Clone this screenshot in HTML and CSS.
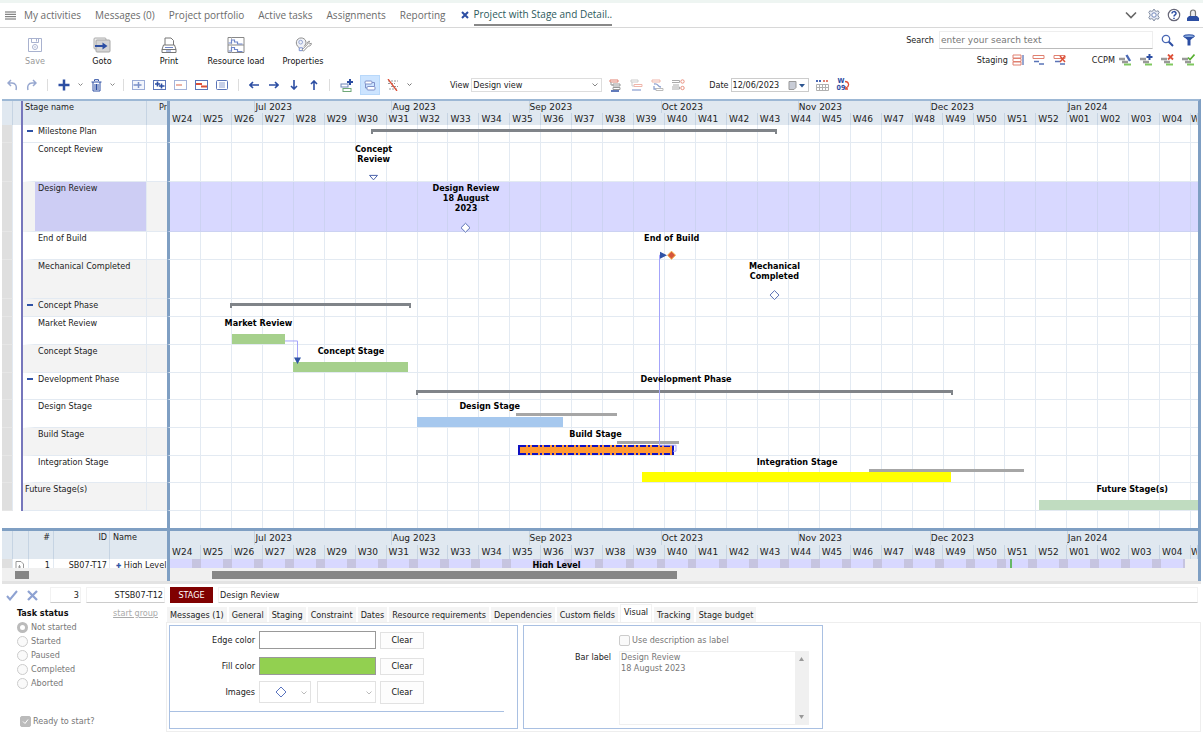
FILE: index.html
```html
<!DOCTYPE html>
<html lang="en">
<head>
<meta charset="utf-8">
<title>Project with Stage and Detail</title>
<link rel="stylesheet" href="styles.css">
</head>
<body>
<header class="topbar">
  <button class="icon-btn" aria-label="Menu"><svg width="11" height="9" viewBox="0 0 11 9"><path d="M0 1h11M0 3.300h11M0 5.700h11M0 8h11" stroke="#666"/></svg></button>
  <nav class="topnav">
    <a href="#">My activities</a><a href="#">Messages (0)</a><a href="#">Project portfolio</a><a href="#">Active tasks</a><a href="#">Assignments</a><a href="#">Reporting</a>
  </nav>
  <button class="icon-btn close" aria-label="Close tab"><svg width="8" height="8" viewBox="0 0 8 8"><path d="M1 1l6 6M7 1L1 7" stroke="#2c4ea3" stroke-width="2"/></svg></button>
  <a href="#" class="current">Project with Stage and Detail..</a>
  <div class="top-actions">
    <button class="icon-btn" aria-label="More"><svg width="12" height="12" viewBox="0 0 12 12"><path d="M1 3.500l5 5 5-5" fill="none" stroke="#666" stroke-width="1.600"/></svg></button>
    <button class="icon-btn" aria-label="Settings"><svg width="14" height="14" viewBox="0 0 14 14"><path d="M7 1l1 1.800 1.300.5L11.200 2.800l1 1.800-1.200 1.500v1.800l1.200 1.500-1 1.800-1.900-.5-1.300.5-1 1.800-1-1.800-1.300-.5-1.900.5-1-1.800L3 7.900V6.100L1.800 4.600l1-1.800 1.900.5L6 2.800z" fill="#e8ecf4" stroke="#8590a5"/><circle cx="7" cy="7" r="2.200" fill="#fff" stroke="#7086bb"/></svg></button>
    <button class="icon-btn" aria-label="Help"><svg width="14" height="14" viewBox="0 0 14 14"><circle cx="7" cy="7" r="5.700" fill="#fff" stroke="#667" stroke-width="1.200"/><path d="M5 5.600c0-2.600 4-2.600 4-.2C9 7 7 6.800 7 8.600M7 9.700v1.400" fill="none" stroke="#2c4ea3" stroke-width="1.500"/></svg></button>
    <button class="icon-btn" aria-label="Account"><svg width="12" height="14" viewBox="0 0 12 14"><path d="M3.500 8V4.500a2.500 2.500 0 015 0V8" fill="#eee" stroke="#777" stroke-width="1.200"/><path d="M0 13V10l2-2h8l2 2v3z" fill="#2c4ea3"/></svg></button>
  </div>
</header>

<section class="commands">
  <div class="main-tools">
    <button class="tool" disabled><svg width="16" height="16" viewBox="0 0 16 16"><path d="M1.500 1.500h13v13h-13zM4.500 1.500v4h7v-4" fill="none" stroke="#a9b2cf"/><circle cx="8" cy="10" r="2.500" fill="none" stroke="#a9b2cf"/><circle cx="8" cy="10" r=".8" fill="#a9b2cf"/><path d="M9.500 2v2.500" stroke="#a9b2cf"/></svg>Save</button>
    <button class="tool"><svg width="20" height="16" viewBox="0 0 20 16"><rect x="2" y="1" width="12" height="11" rx="1" fill="#eee" stroke="#aaa"/><rect x="4" y="3" width="14" height="12" rx="1" fill="#d4d4d4" stroke="#a8a8a8"/><path d="M3 9h9" stroke="#2c4ea3" stroke-width="2"/><path d="M10.500 5.500L15.500 9l-5 3.500z" fill="#2c4ea3"/></svg>Goto</button>
    <button class="tool"><svg width="18" height="16" viewBox="0 0 18 16"><path d="M5 8V1h6l2.500 2.500V8" fill="#fff" stroke="#777"/><path d="M2 12.500L3.500 8h11l1.500 4.500v3H2zM2 12.500h14" fill="#fff" stroke="#777"/><path d="M5 10.500h8M6 14h5" stroke="#6f86c9"/></svg>Print</button>
    <button class="tool"><svg width="18" height="16" viewBox="0 0 18 16"><path d="M1 .5h16v15H1zM1 8h16" fill="#fff" stroke="#888"/><path d="M4.500 .5v15" stroke="#bbb"/><path d="M1.500 6h3V3h3v2h3v2h5M1.500 14h3v-3.500h3v2h3v2h5" fill="none" stroke="#6f86c9" stroke-width="1.200"/></svg>Resource load</button>
    <button class="tool"><svg width="18" height="16" viewBox="0 0 18 17"><path d="M5 11.500C-.5 7.500 2 1 7 1s7 5.500 3 9" fill="#f0f2f7" stroke="#888"/><path d="M5 11.500v3h3.500v-3z" fill="#fff" stroke="#6f86c9"/><circle cx="6.500" cy="5.500" r="2" fill="none" stroke="#8fa0cf"/><path d="M8 13.500l5.500-5.500c-.5-2 .5-3.500 2.500-3.500l-1 2 .8 1 2-.8c.2 2-1.300 3.200-3 2.800L9.500 15z" fill="#fff" stroke="#888"/></svg>Properties</button>
  </div>
  <div class="side-tools">
    <div class="search">
      <label for="q">Search</label><input id="q" type="text" placeholder="enter your search text">
      <button class="icon-btn" aria-label="Find"><svg width="13" height="13" viewBox="0 0 13 13"><circle cx="5" cy="5" r="3.700" fill="#fff" stroke="#4a68b5" stroke-width="1.300"/><path d="M7.800 7.800L12 12" stroke="#2c4ea3" stroke-width="2"/></svg></button>
      <button class="icon-btn" aria-label="Filter"><svg width="12" height="12" viewBox="0 0 12 12"><path d="M.5 2.500L4.500 6v5.500h3V6l4-3.500z" fill="#2c4ea3"/><ellipse cx="6" cy="2.200" rx="5.500" ry="1.400" fill="#8fb0e0" stroke="#2c4ea3"/></svg></button>
    </div>
    <div class="modes">
      <span>Staging</span>
      <button class="icon-btn" aria-label="Stage rows"><svg width="12" height="12" viewBox="0 0 12 12"><path d="M1 1h8v3H1zM1 4.500h8v3H1zM1 8h8v3H1z" fill="#fff" stroke="#e08070"/><path d="M11 1v10" stroke="#2c4ea3"/></svg></button>
      <button class="icon-btn" aria-label="Stage link"><svg width="13" height="12" viewBox="0 0 13 12"><path d="M1 1.500h11v3H1z" fill="#fff" stroke="#e08070"/><path d="M2 7.500h5M7 10h5" stroke="#5a74b8" stroke-width="1.600"/></svg></button>
      <button class="icon-btn" aria-label="Remove stage"><svg width="13" height="12" viewBox="0 0 13 12"><path d="M1 1.500h11v3H1z" fill="#fff" stroke="#e08070"/><path d="M2 7.500h5M7 10h5" stroke="#5a74b8" stroke-width="1.600"/><path d="M7 2l5 6M12 2L7 8" stroke="#dd5038" stroke-width="1.500"/></svg></button>
      <span class="ccpm">CCPM</span>
      <button class="icon-btn" aria-label="Edit chain"><svg width="13" height="12" viewBox="0 0 13 12"><path d="M0 5h6M3 8h6" stroke="#999" stroke-width="2.500"/><path d="M5 10.500h7" stroke="#80c860" stroke-width="2"/><path d="M7.500 1L11 7" stroke="#4a68b5" stroke-width="2.400"/></svg></button>
      <button class="icon-btn" aria-label="Add chain"><svg width="13" height="12" viewBox="0 0 13 12"><path d="M0 5h6M3 8h6" stroke="#999" stroke-width="2.500"/><path d="M5 10.500h7" stroke="#80c860" stroke-width="2"/><path d="M9.500 0v6M6.500 3h6" stroke="#2c4ea3" stroke-width="2"/></svg></button>
      <button class="icon-btn" aria-label="Delete chain"><svg width="13" height="12" viewBox="0 0 13 12"><path d="M0 5h6M3 8h6" stroke="#999" stroke-width="2.500"/><path d="M5 10.500h7" stroke="#80c860" stroke-width="2"/><path d="M7 .5l5 5M12 .5l-5 5" stroke="#dd5038" stroke-width="1.800"/></svg></button>
      <button class="icon-btn" aria-label="Accept chain"><svg width="13" height="12" viewBox="0 0 13 12"><path d="M0 5h6M3 8h6" stroke="#999" stroke-width="2.500"/><path d="M5 10.500h7" stroke="#80c860" stroke-width="2"/><path d="M6 3.500l2 2L12.500 .5" fill="none" stroke="#58b030" stroke-width="1.600"/></svg></button>
    </div>
  </div>
</section>

<section class="editbar">
  <div class="tools">
    <button class="icon-btn" aria-label="Undo"><svg width="11" height="12" viewBox="0 0 11 12"><path d="M4 1L1 4l3 3M1.500 4H5c3.500 0 5 3 4 7" fill="none" stroke="#98a8d0" stroke-width="1.500"/></svg></button>
    <button class="icon-btn" aria-label="Redo"><svg width="11" height="12" viewBox="0 0 11 12"><path d="M7 1l3 3-3 3M9.500 4H6C2.500 4 1 7 2 11" fill="none" stroke="#98a8d0" stroke-width="1.500"/></svg></button>
    <i class="sep"></i>
    <button class="icon-btn" aria-label="Add"><svg width="12" height="12" viewBox="0 0 12 12"><path d="M6 .5v11M.5 6h11" stroke="#2c4ea3" stroke-width="2.500"/></svg></button>
    <button class="icon-btn" aria-label="Add options"><svg width="5" height="4" viewBox="0 0 5 4"><path d="M.5 .5l2 2 2-2" fill="none" stroke="#888"/></svg></button>
    <button class="icon-btn" aria-label="Delete"><svg width="11" height="13" viewBox="0 0 11 13"><path d="M3.500 2V.7h4V2M.5 3h10M2 3v9h7V3M4 5v6M5.500 5v6M7 5v6" fill="none" stroke="#2c4ea3"/></svg></button>
    <button class="icon-btn" aria-label="Delete options"><svg width="5" height="4" viewBox="0 0 5 4"><path d="M.5 .5l2 2 2-2" fill="none" stroke="#888"/></svg></button>
    <i class="sep wide"></i>
    <button class="icon-btn" aria-label="Expand"><svg width="13" height="10" viewBox="0 0 13 10"><rect x=".5" y=".5" width="12" height="9" fill="#f2f5fc" stroke="#9aabd6"/><path d="M6.500 2v6M3.500 5h6M3.500 5h-2" stroke="#7a90c8" stroke-width="1.500"/></svg></button>
    <button class="icon-btn" aria-label="Expand all"><svg width="13" height="10" viewBox="0 0 13 10"><rect x=".5" y=".5" width="12" height="9" fill="#fff" stroke="#5a74b8"/><path d="M4.500 1.500v5M2 4h5M8.500 3.500v5M6 6h5.500" stroke="#2c4ea3" stroke-width="1.600"/></svg></button>
    <button class="icon-btn" aria-label="Collapse"><svg width="13" height="10" viewBox="0 0 13 10"><rect x=".5" y=".5" width="12" height="9" fill="#fff" stroke="#a5b4da"/><path d="M2 5h6" stroke="#e8a090" stroke-width="1.600"/></svg></button>
    <button class="icon-btn" aria-label="Collapse all"><svg width="13" height="10" viewBox="0 0 13 10"><rect x=".5" y=".5" width="12" height="9" fill="#fff" stroke="#5a74b8"/><path d="M1 4h6M6 6.500h6" stroke="#dd5038" stroke-width="2"/></svg></button>
    <button class="icon-btn" aria-label="Details"><svg width="12" height="10" viewBox="0 0 12 10"><rect x=".5" y=".5" width="11" height="9" rx="1" fill="#fff" stroke="#5a74b8"/><path d="M3 3h6M3 5h6M3 7h6" stroke="#8ea0d0"/></svg></button>
    <i class="sep"></i>
    <button class="icon-btn" aria-label="Outdent"><svg width="10" height="10" viewBox="0 0 10 10"><path d="M1.500 5H10M4 2L1 5l3 3" fill="none" stroke="#2c4ea3" stroke-width="1.600"/></svg></button>
    <button class="icon-btn arrow-btn" aria-label="Indent"><svg width="10" height="10" viewBox="0 0 10 10"><path d="M0 5h8.500M6 2l3 3-3 3" fill="none" stroke="#2c4ea3" stroke-width="1.600"/></svg></button>
    <button class="icon-btn arrow-btn" aria-label="Move down"><svg width="10" height="10" viewBox="0 0 10 10"><path d="M5 0v8.500M2 6l3 3 3-3" fill="none" stroke="#2c4ea3" stroke-width="1.600"/></svg></button>
    <button class="icon-btn arrow-btn" aria-label="Move up"><svg width="10" height="10" viewBox="0 0 10 10"><path d="M5 1.500V10M2 4l3-3 3 3" fill="none" stroke="#2c4ea3" stroke-width="1.600"/></svg></button>
    <i class="sep"></i>
    <button class="icon-btn" aria-label="Add link"><svg width="13" height="13" viewBox="0 0 13 13"><rect x="1" y="5" width="7" height="3" fill="#fff" stroke="#6f86b8"/><rect x="3" y="9.500" width="8" height="3" fill="#fff" stroke="#70a878"/><path d="M10 0v6M7 3h6" stroke="#2c4ea3" stroke-width="2"/></svg></button>
    <button class="icon-btn active" aria-label="Show links"><svg width="12" height="11" viewBox="0 0 12 11"><rect x="1" y="1" width="7" height="3" rx="1" fill="#fff" stroke="#8090c8"/><rect x="3" y="6.500" width="8" height="3.500" rx="1" fill="#fff" stroke="#8090c8"/><path d="M8 2.500h2.500v4M1.500 4v4H3" fill="none" stroke="#8090c8"/></svg></button>
    <button class="icon-btn" aria-label="Hide links"><svg width="12" height="12" viewBox="0 0 12 12"><path d="M1 2h10M1 4.500h7M4 7.500h7M2 10h9" stroke="#999" stroke-dasharray="2 1"/><path d="M1 0l9 12" stroke="#dd5038" stroke-width="1.300"/></svg></button>
    <button class="icon-btn" aria-label="Link options"><svg width="5" height="4" viewBox="0 0 5 4"><path d="M.5 .5l2 2 2-2" fill="none" stroke="#777"/></svg></button>
  </div>
  <label for="view">View</label>
  <div class="picker"><select id="view"><option>Design view</option></select><svg width="6" height="4" viewBox="0 0 6 4"><path d="M.5 .5L3 3 5.500 .5" fill="none" stroke="#888"/></svg></div>
  <div class="view-tools">
    <button class="icon-btn" aria-label="Stage outline"><svg width="13" height="13" viewBox="0 0 13 13"><path d="M1 1h8v2H1z" fill="#fff" stroke="#e08070"/><path d="M4 5h7v2H4zM4 8.500h7v2H4zM2 3v3h2" fill="#fff" stroke="#999"/><path d="M2 12h8" stroke="#2c4ea3" stroke-width="1.500"/></svg></button>
    <button class="icon-btn" aria-label="Shift stages"><svg width="13" height="13" viewBox="0 0 13 13"><path d="M1 1h7v2H1z" fill="#fff" stroke="#ccc"/><path d="M4 5.500h8v2H4z" fill="#fff" stroke="#efb5aa"/><path d="M2 11h9" stroke="#a0b0d8" stroke-width="1.500"/><path d="M2 3v4h2" fill="none" stroke="#ccc"/></svg></button>
    <button class="icon-btn" aria-label="Reorder stages"><svg width="13" height="13" viewBox="0 0 13 13"><path d="M1 1h8v2H1z" fill="#fff" stroke="#efb5aa"/><path d="M5 9.500h7v2H5z" fill="#fff" stroke="#bbb"/><path d="M3 5c5-1 3 3 7 3M3 7v3h2" fill="none" stroke="#90a2d0" stroke-width="1.300"/></svg></button>
    <button class="icon-btn" aria-label="Milestones"><svg width="13" height="12" viewBox="0 0 13 12"><path d="M0 1.500h7.500v2H0M0 8h7.500v2H0M1 6h6" fill="none" stroke="#aaa"/><circle cx="10.500" cy="2.500" r="1.700" fill="#fff" stroke="#e89080"/><circle cx="10.500" cy="9" r="1.700" fill="#fff" stroke="#e89080"/></svg></button>
  </div>
  <label for="date">Date</label>
  <div class="datebox"><input id="date" type="text" value="12/06/2023"><svg width="17" height="9" viewBox="0 0 17 9"><path d="M1 .5h7v6l-2 2H1z" fill="#c8ccd6" stroke="#999"/><path d="M11 3h6l-3 3.500z" fill="#2c5590"/></svg></div>
  <button class="icon-btn" aria-label="Time scale"><svg width="13" height="12" viewBox="0 0 13 12"><path d="M.5 5.500h12v6H.5zM.5 8.500h12M3.500 5.500v6M6.500 5.500v6M9.500 5.500v6" fill="#fff" stroke="#b0b0b0"/><path d="M0 2h6" stroke="#4a68b5" stroke-dasharray="2 1" stroke-width="2"/><path d="M7 2h6" stroke="#e08070" stroke-dasharray="2 1" stroke-width="2"/></svg></button>
  <button class="icon-btn week-btn" aria-label="Week numbers"><span>W<br>09</span><svg width="5" height="10" viewBox="0 0 5 10"><path d="M0 1.500c4 0 5 4.500 1 6.500M0 6v3h3" fill="none" stroke="#dd5038" stroke-width="1.300"/></svg></button>
</section>

<main class="gantt">
  <table class="plan">
    <thead>
      <tr>
        <th class="mark"></th><th class="pad"></th><th class="name">Stage name</th><th class="pr">Pr</th>
        <th class="lane scale">
          <div class="months"><span style="flex-grow:85"></span><span style="flex-grow:137">Jul 2023</span><span style="flex-grow:137">Aug 2023</span><span style="flex-grow:132">Sep 2023</span><span style="flex-grow:137">Oct 2023</span><span style="flex-grow:132">Nov 2023</span><span style="flex-grow:137">Dec 2023</span><span style="flex-grow:131">Jan 2024</span></div>
          <div class="weeks"><span>W24</span><span>W25</span><span>W26</span><span>W27</span><span>W28</span><span>W29</span><span>W30</span><span>W31</span><span>W32</span><span>W33</span><span>W34</span><span>W35</span><span>W36</span><span>W37</span><span>W38</span><span>W39</span><span>W40</span><span>W41</span><span>W42</span><span>W43</span><span>W44</span><span>W45</span><span>W46</span><span>W47</span><span>W48</span><span>W49</span><span>W50</span><span>W51</span><span>W52</span><span>W01</span><span>W02</span><span>W03</span><span>W04</span><span>W</span></div>
        </th>
      </tr>
    </thead>
    <tbody>
      <tr><td class="mark"></td><td class="pad"></td><td class="name phase">Milestone Plan</td><td class="pr"></td><td class="lane"><div class="summary" style="left:19.6%;width:39.4%"></div></td></tr>
      <tr><td class="mark"></td><td class="pad"></td><td class="name">Concept Review</td><td class="pr"></td><td class="lane"><div class="label" style="left:19.8%">Concept<br>Review</div></td></tr>
      <tr class="alt selected"><td class="mark"></td><td class="pad"></td><td class="name">Design Review</td><td class="pr"></td><td class="lane"><div class="label" style="left:28.8%">Design Review<br>18 August<br>2023</div></td></tr>
      <tr><td class="mark"></td><td class="pad"></td><td class="name">End of Build</td><td class="pr"></td><td class="lane"><div class="label" style="left:48.8%">End of Build</div></td></tr>
      <tr class="alt"><td class="mark"></td><td class="pad"></td><td class="name">Mechanical Completed</td><td class="pr"></td><td class="lane"><div class="label" style="left:58.8%">Mechanical<br>Completed</div></td></tr>
      <tr class="alt"><td class="mark"></td><td class="pad"></td><td class="name phase">Concept Phase</td><td class="pr"></td><td class="lane"><div class="summary" style="left:5.8%;width:17.6%"></div></td></tr>
      <tr><td class="mark"></td><td class="pad"></td><td class="name">Market Review</td><td class="pr"></td><td class="lane"><div class="label" style="left:8.6%">Market Review</div><div class="bar" style="left:6%;width:5.2%"></div></td></tr>
      <tr class="alt"><td class="mark"></td><td class="pad"></td><td class="name">Concept Stage</td><td class="pr"></td><td class="lane"><div class="label" style="left:17.6%">Concept Stage</div><div class="bar" style="left:12%;width:11.2%"></div></td></tr>
      <tr><td class="mark"></td><td class="pad"></td><td class="name phase">Development Phase</td><td class="pr"></td><td class="lane"><div class="label" style="left:50.2%">Development Phase</div><div class="summary low" style="left:23.9%;width:52.3%"></div></td></tr>
      <tr><td class="mark"></td><td class="pad"></td><td class="name">Design Stage</td><td class="pr"></td><td class="lane"><div class="label" style="left:31.1%">Design Stage</div><div class="base" style="left:33.7%;width:9.8%"></div><div class="bar blue" style="left:24%;width:14.2%"></div></td></tr>
      <tr class="alt"><td class="mark"></td><td class="pad"></td><td class="name">Build Stage</td><td class="pr"></td><td class="lane"><div class="label" style="left:41.4%">Build Stage</div><div class="base" style="left:43.5%;width:6%"></div><div class="bar orange" style="left:33.9%;width:15.1%"></div></td></tr>
      <tr><td class="mark"></td><td class="pad"></td><td class="name">Integration Stage</td><td class="pr"></td><td class="lane"><div class="label" style="left:61%">Integration Stage</div><div class="base" style="left:68%;width:15.1%"></div><div class="bar yellow" style="left:45.9%;width:30.1%"></div></td></tr>
      <tr class="alt"><td class="mark"></td><td class="pad"></td><td class="name top">Future Stage(s)</td><td class="pr"></td><td class="lane"><div class="label" style="left:93.6%">Future Stage(s)</div><div class="bar pale" style="left:84.5%;width:15.5%"></div></td></tr>
      <tr class="empty"><td class="rest"></td><td class="lane"></td></tr>
    </tbody>
  </table>
  <svg class="links" viewBox="0 0 1028 404" preserveAspectRatio="none">
    <path d="M115 216.500h12.500V236M503 327h3V321h-16.500V130.500h2" fill="none" stroke="#a4a4fa"/>
    <path d="M124 233h7l-3.500 6.500zM490 127v7l7-3.500z" fill="#2f52a5"/>
    <path d="M199.500 50.500h8l-4 4.500z" fill="#fff" stroke="#4a62ab"/>
    <path d="M295.500 98.500l4.500 4.500-4.500 4.500-4.500-4.500zM604.500 166l4.500 4.500-4.500 4.500-4.500-4.500z" fill="#fff" stroke="#5a70b4"/>
    <path d="M501.500 126.500l4 4-4 4-4-4z" fill="#d4553c" stroke="#f5b040"/>
  </svg>
</main>

<section class="detail">
  <table class="plan tasks">
    <thead>
      <tr>
        <th class="mark"></th><th class="doc"></th><th class="num">#</th><th class="id">ID</th><th class="task">Name</th>
        <th class="lane scale">
          <div class="months"><span style="flex-grow:85"></span><span style="flex-grow:137">Jul 2023</span><span style="flex-grow:137">Aug 2023</span><span style="flex-grow:132">Sep 2023</span><span style="flex-grow:137">Oct 2023</span><span style="flex-grow:132">Nov 2023</span><span style="flex-grow:137">Dec 2023</span><span style="flex-grow:131">Jan 2024</span></div>
          <div class="weeks"><span>W24</span><span>W25</span><span>W26</span><span>W27</span><span>W28</span><span>W29</span><span>W30</span><span>W31</span><span>W32</span><span>W33</span><span>W34</span><span>W35</span><span>W36</span><span>W37</span><span>W38</span><span>W39</span><span>W40</span><span>W41</span><span>W42</span><span>W43</span><span>W44</span><span>W45</span><span>W46</span><span>W47</span><span>W48</span><span>W49</span><span>W50</span><span>W51</span><span>W52</span><span>W01</span><span>W02</span><span>W03</span><span>W04</span><span>W</span></div>
        </th>
      </tr>
    </thead>
    <tbody>
      <tr><td class="mark"></td><td class="doc"><svg width="9" height="10" viewBox="0 0 9 10"><path d="M1 .5h5L8.500 3v6.500H1zM4.500 4v4M3 6h3" fill="none" stroke="#999"/></svg></td><td class="num">1</td><td class="id">SB07-T17</td><td class="task"><b>✚</b> High Level</td><td class="lane"><div class="days"></div><div class="today" style="left:81.7%"></div><div class="label" style="left:37.6%">High Level</div></td></tr>
    </tbody>
  </table>
  <div class="scrolls"><div class="scroll-left"><i></i></div><div class="scroll-right"><i style="margin-left:4.1%;width:45.2%"></i></div></div>
</section>

<form class="record">
  <button type="button" class="icon-btn" aria-label="Accept"><svg width="12" height="11" viewBox="0 0 12 11"><path d="M1 6l3 3.500L11 1" fill="none" stroke="#8ea2d2" stroke-width="2"/></svg></button>
  <button type="button" class="icon-btn" aria-label="Cancel"><svg width="11" height="11" viewBox="0 0 11 11"><path d="M1 1l9 9M10 1l-9 9" stroke="#8ea2d2" stroke-width="2.300"/></svg></button>
  <input class="field num-field" aria-label="Number" value="3">
  <input class="field id-field" aria-label="ID" value="STSB07-T12">
  <span class="badge">STAGE</span>
  <input class="field title-field" aria-label="Stage name" value="Design Review">
</form>

<section class="editor">
  <aside class="status">
    <div class="status-head"><strong>Task status</strong><a href="#">start group</a></div>
    <label><input type="radio" name="st" checked disabled>Not started</label>
    <label><input type="radio" name="st" disabled>Started</label>
    <label><input type="radio" name="st" disabled>Paused</label>
    <label><input type="radio" name="st" disabled>Completed</label>
    <label><input type="radio" name="st" disabled>Aborted</label>
    <label class="ready"><input type="checkbox" checked disabled>Ready to start?</label>
  </aside>
  <div class="tabs-area">
    <div class="tabs" role="tablist"><button role="tab">Messages (1)</button><button role="tab">General</button><button role="tab">Staging</button><button role="tab">Constraint</button><button role="tab">Dates</button><button role="tab">Resource requirements</button><button role="tab">Dependencies</button><button role="tab">Custom fields</button><button role="tab" class="on" aria-selected="true">Visual</button><button role="tab">Tracking</button><button role="tab">Stage budget</button></div>
    <div class="sheet">
      <div class="group colors">
        <div class="rows">
          <label for="edge">Edge color</label><input id="edge" type="color" value="#ffffff"><button>Clear</button>
          <label for="fill">Fill color</label><input id="fill" type="color" value="#92d050"><button>Clear</button>
          <label for="img">Images</label>
          <div class="images">
            <div class="pick first"><select id="img" aria-label="Image"><option></option></select><svg class="shape" width="12" height="12" viewBox="0 0 12 12"><path d="M6 1l5 5-5 5-5-5z" fill="#fff" stroke="#5a74c0"/></svg><svg class="arrow" width="6" height="4" viewBox="0 0 6 4"><path d="M.5 .5L3 3 5.500 .5" fill="none" stroke="#bbb"/></svg></div>
            <div class="pick"><select aria-label="Second image"><option></option></select><svg class="arrow" width="6" height="4" viewBox="0 0 6 4"><path d="M.5 .5L3 3 5.500 .5" fill="none" stroke="#bbb"/></svg></div>
          </div>
          <button class="tall">Clear</button>
        </div>
      </div>
      <div class="group text">
        <label class="check"><input type="checkbox" disabled>Use description as label</label>
        <label for="barlabel" class="bl">Bar label</label>
        <div class="area"><textarea id="barlabel" disabled>Design Review
18 August 2023</textarea><div class="rail"><svg width="5" height="4" viewBox="0 0 5 4"><path d="M0 4h5L2.500 0z" fill="#999"/></svg><svg width="5" height="4" viewBox="0 0 5 4"><path d="M0 0h5L2.500 4z" fill="#999"/></svg></div></div>
      </div>
    </div>
  </div>
</section>
</body>
</html>
```
FILE: styles.css
```css
* { box-sizing: border-box; }
:root {
  --ui: "DejaVu Sans Condensed", "Noto Sans", sans-serif;
  --wide: "DejaVu Sans", Verdana, sans-serif;
  --nav: "Open Sans", "Noto Sans", sans-serif;
  --week: 3.01%;
  --line: #e3eaf2;
  --head: #e0e8f0;
  --head-line: #c6d4e3;
  --divider: #7f9fc3;
}
body {
  margin: 0;
  min-height: 100vh;
  display: flex;
  flex-direction: column;
  font: 9px/12px var(--ui);
  color: #222;
  background: #fff;
}
button, input, select, textarea { font: inherit; color: inherit; margin: 0; }
svg { display: block; flex: none; }
a { color: inherit; text-decoration: none; }
.icon-btn { border: 0; padding: 0; background: none; display: flex; align-items: center; justify-content: center; }

.topbar {
  display: flex; align-items: center;
  height: 28px; padding: 0 4px 0 5px;
  border-top: 3px solid #eef5f2; border-bottom: 1px solid #d8d8d8;
  font: 10px/22px var(--nav); color: #6b6b6b;
}
.topnav { display: flex; gap: 14px; margin-left: 8px; }
.close { margin: 0 5px 0 15px; }
.current { color: #2d5a5c; line-height: 20px; border-bottom: 2px solid #888; }
.top-actions { display: flex; align-items: center; gap: 6px; margin-left: auto; }
.top-actions .icon-btn:first-child { margin-right: 4px; }

.commands { display: flex; justify-content: space-between; height: 46px; padding: 3px 8px 0 10px; }
.main-tools { display: flex; gap: 17px; padding-top: 6px; }
.tool {
  display: flex; flex-direction: column; align-items: center; gap: 2px;
  width: 50px; height: 32px; padding: 0; border: 0; background: none; color: #111; white-space: nowrap;
}
.tool:disabled { color: #999; }
.search, .modes { display: flex; align-items: center; justify-content: flex-end; }
.search input { width: 214px; height: 18px; margin: 0 8px 0 5px; padding: 0 1px; border: 1px solid #eee; border-bottom-color: #bbb; font-family: var(--wide); }
.search input::placeholder { color: #777; }
.search .icon-btn + .icon-btn { margin-left: 9px; }
.modes { gap: 8px; margin-top: 5px; }
.modes span { margin-right: -4px; }
.modes .ccpm { margin-left: 18px; }

.editbar { display: flex; align-items: center; height: 25px; padding: 0 8px 3px 7px; }
.tools { display: flex; align-items: center; gap: 8px; }
.sep { width: 1px; height: 12px; background: #ddd; margin: 0 2px; }
.sep.wide { margin-right: 0; margin-left: 0; }
.arrow-btn { margin-left: 2px; }
.active { width: 20px; height: 20px; margin: 0 -1px; background: #cce4ff; border: 1px solid #b8d8fa; }
.editbar label { margin-left: 38px; }
.picker { position: relative; margin-left: 2px; }
.picker select { width: 131px; height: 14px; border: 1px solid #ddd; background: #fff; padding: 0 1px; appearance: none; display: block; }
.picker svg { position: absolute; right: 4px; top: 5px; }
.view-tools { display: flex; gap: 8px; margin-left: 7px; }
.editbar .view-tools + label { margin-left: 24px; }
.datebox { display: flex; align-items: center; width: 78px; height: 14px; margin: 0 7px 0 2px; border: 1px solid #ccc; }
.datebox input { width: 56px; height: 12px; padding: 0 0 0 1px; border: 0; }
.week-btn { margin-left: 8px; color: #2c4ea3; font: bold 7px/7px var(--ui); }

.gantt { flex: 1; position: relative; display: flex; margin: 0 2px; }
.plan { flex: 1; display: flex; flex-direction: column; border-top: 2px solid #9db8d5; border-right: 3px solid var(--divider); min-width: 0; }
.plan tr { display: flex; min-width: 0; }
.plan th, .plan td { display: block; padding: 0; text-align: left; font-weight: normal; flex: none; overflow: hidden; white-space: nowrap; border-right: 1px solid var(--line); }
.plan thead th { background: var(--head); border-right-color: var(--head-line); height: 24px; }
.plan tbody { flex: 1; display: grid; grid-template-rows: 18fr 40fr 50fr 28fr 40fr repeat(1, 18fr) repeat(7, 28fr) 17fr; }
.plan .mark { width: 11px; }
.plan .pad { width: 10px; border-right: 2px solid #7676bb; }
.plan thead .pad { border-right-color: #7676bb; }
.plan .name { width: 124px; }
.plan .pr { width: 20px; border-right: 0; }
.plan thead .pr { padding-left: 12px; }
.plan thead .name { padding-left: 2px; }
.plan tbody td { border-bottom: 1px solid var(--line); }
.plan tbody .mark { background: #dfdfdf; border-bottom-color: #e6e6e6; }
.plan tbody .pad { border-bottom: 0; }
.plan tbody .name { padding: 0 0 0 3px; border-left: 12px solid #fff; }
.plan tbody .phase { background: linear-gradient(#2f52a5, #2f52a5) 4px 5px / 6px 2px no-repeat; border-left: 0; padding-left: 15px; }
.alt .name, .alt .pr { background-color: #f3f3f3; }
.plan tbody .alt .name { border-left-color: #f3f3f3; }
.plan tbody .alt .phase { background-color: #f3f3f3; }
.plan tbody .top { border-left: 0; padding-left: 2px; }
.plan tbody .selected .name { background: #cdcdf4; }
.plan .rest { width: 165px; }
.plan .empty td { border-bottom: 0; border-right: 0; }
.plan .lane {
  flex: 1; position: relative; min-width: 0; border-left: 3px solid var(--divider); border-right: 0; overflow: visible;
}
.plan tbody .lane { background: repeating-linear-gradient(to right, transparent 0 calc(var(--week) - 1px), var(--line) calc(var(--week) - 1px) var(--week)); }
.plan tbody .selected .lane { background-color: #d8d8ff; }
.plan tbody .selected .lane { --line: #ccd2f2; }
.plan .scale { overflow: hidden; font-family: var(--wide); }
.months, .weeks { display: flex; height: 12px; }
.months span { flex: 1 1 0; min-width: 0; border-left: 1px solid var(--head-line); }
.months span:first-child { border-left: 0; }
.weeks span { flex: 0 0 var(--week); padding-left: 2px; border-right: 1px solid var(--head-line); overflow: hidden; }
.weeks span:last-child { flex: 1 1 0; padding: 0; min-width: 0; }

.label { position: absolute; top: 1px; z-index: 1; transform: translateX(-50%); text-align: center; font: bold 9px/10px var(--ui); color: #000; }
.bar { position: absolute; bottom: 0; height: 10px; background: #a6d08c; }
.blue { background: #a6c8ee; }
.orange { background: repeating-linear-gradient(to right, #1010c0 0 6px, #ff9933 6px 8px, #1010c0 8px 10px, #ff9933 10px 12px) top / 100% 2px no-repeat, repeating-linear-gradient(to right, #1010c0 0 6px, #ff9933 6px 8px, #1010c0 8px 10px, #ff9933 10px 12px) bottom / 100% 2px no-repeat, #ff9933; border: dashed #1010c0; border-width: 0 2px; }
.yellow { background: #ffff00; }
.pale { background: #c0dcc0; }
.base { position: absolute; top: 13px; height: 3px; background: #a6a6a6; }
.summary { position: absolute; top: 4px; height: 5px; border: 2px solid #808489; border-top-width: 3px; border-bottom: 0; }
.low { top: 17px; }
.links { position: absolute; top: 26px; left: 168px; width: calc(100% - 171px); height: calc(100% - 26px); }

.detail { margin: 0 2px; }
.tasks { border-top: 3px solid var(--divider); }
.tasks thead th { height: 28px; }
.tasks .months, .tasks .weeks { height: 14px; line-height: 14px; }
.plan.tasks tbody { flex: none; display: block; height: 9px; overflow: hidden; background: #f0f0f0; }
.tasks td:not(.lane):not(.mark) { background: #fff; }
.tasks .doc { width: 16px; padding: 2px 0 0 2px; }
.tasks .num { width: 25px; text-align: right; padding-right: 3px; }
.tasks .id { width: 56px; text-align: right; padding-right: 2px; }
.tasks .task { width: 57px; padding-left: 3px; border-right: 0; }
.plan.tasks tbody td { height: 9px; border-bottom: 0; }
.plan.tasks tbody .task { padding-left: 6px; }
.task b { color: #2f52a5; font-size: 7px; }
.plan.tasks tbody .lane { background: none; }
.days { width: 98.7%; height: 9px; background: repeating-linear-gradient(to right, #d8d8ff 0 2.19%, #c6c4e0 2.19% 3.05%); }
.today { position: absolute; top: 0; width: 2px; height: 9px; background: #66b866; }
.scrolls { display: flex; height: 16px; background: #f0f0f0; border-bottom: 3px solid #e3e3e3; }
.scroll-left { width: 165px; padding: 3px 0 0 13px; }
.scroll-right { flex: 1; padding-top: 3px; border-left: 3px solid var(--divider); border-right: 3px solid var(--divider); }
.scrolls i { display: block; width: 14px; height: 8px; background: #868686; }

.record { display: flex; align-items: center; height: 20px; padding: 2px 5px 0 6px; }
.record .icon-btn + .icon-btn { margin: 0 12px 0 9px; }
.field { height: 16px; padding: 0 1px; border: 1px solid #f2f2f2; border-bottom-color: #ccc; background: #fff; }
.num-field { width: 31px; text-align: right; margin-right: 5px; }
.id-field { width: 79px; text-align: right; margin-right: 5px; }
.badge { width: 43px; height: 16px; line-height: 16px; text-align: center; background: #800000; color: #fff; margin-right: 5px; }
.title-field { flex: 1; min-width: 0; }

.editor { display: flex; height: 129px; padding: 0 2px 1px 0; }
.status { width: 166px; padding: 3px 8px 0 17px; color: #777; }
.status-head { display: flex; justify-content: space-between; margin-bottom: 1px; }
.status-head strong { color: #111; }
.status-head a { color: #aaa; text-decoration: underline; }
.status label { display: flex; align-items: center; height: 14px; gap: 3px; line-height: 14px; }
.status input, .check input { appearance: none; width: 11px; height: 11px; border: 1px solid #ccc; background: #fafafa; }
.status input[type=radio] { border-radius: 50%; }
.status input[type=radio]:checked { border: 3px solid #bbb; background: #fff; }
.status .ready { margin: 24px 0 0 3px; gap: 2px; }
.status .ready input { border-radius: 2px; border-color: #bbb; background: url("data:image/svg+xml,%3Csvg xmlns='http://www.w3.org/2000/svg' viewBox='0 0 9 9'%3E%3Cpath d='M2 4.5l2 2 3-4' fill='none' stroke='white'/%3E%3C/svg%3E") #bbb; }
.tabs-area { flex: 1; display: flex; flex-direction: column; min-width: 0; }
.tabs { display: flex; align-items: flex-end; gap: 2px; height: 18px; padding-left: 1px; }
.tabs button { height: 15px; padding: 0 3px; border: 0; background: #f4f4f4; white-space: nowrap; color: #222; }
.tabs .on { height: 18px; padding-bottom: 4px; background: #fff; border: 1px solid #f2f2f2; border-bottom: 0; }
.sheet { flex: 1; display: flex; gap: 5px; padding: 2px; border: 1px solid #eee; }
.group { border: 1px solid #a9c0e2; }
.colors { width: 349px; }
.rows { display: grid; grid-template-columns: 85px 117px 44px; grid-auto-rows: 18px; gap: 8px 4px; align-items: center; width: 334px; height: 86px; padding-top: 5px; border-bottom: 1px solid #a9c0e2; }
.rows label { text-align: right; }
.rows > input { appearance: none; width: 117px; height: 18px; padding: 0; border: 1px solid #999; background: none; }
.rows > input::-webkit-color-swatch-wrapper { padding: 0; }
.rows > input::-webkit-color-swatch { border: 0; }
.rows button { height: 17px; padding: 0; border: 1px solid #e2e2e2; background: #fdfdfd; color: #111; }
.rows .tall { height: 23px; }
.images { display: flex; gap: 6px; }
.pick { position: relative; flex: 1; }
.pick.first { flex: 0 0 52px; }
.pick select { display: block; width: 100%; height: 22px; appearance: none; border: 1px solid #e2e2e2; background: #fff; }
.shape { position: absolute; left: 16px; top: 5px; }
.arrow { position: absolute; right: 4px; top: 10px; }
.text { width: 300px; display: grid; grid-template-columns: 87px 190px; grid-template-rows: 12px 74px; gap: 5px 8px; padding-top: 8px; }
.check { grid-column: 2; display: flex; align-items: center; gap: 2px; color: #777; }
.check input { border-radius: 2px; }
.bl { text-align: right; }
.area { display: flex; border: 1px solid #f0f0f0; }
.area textarea { flex: 1; min-width: 0; padding: 0 1px; border: 0; resize: none; background: #fff; color: #777; line-height: 11px; overflow: hidden; }
.rail { width: 13px; display: flex; flex-direction: column; align-items: center; justify-content: space-between; padding: 5px 0; background: #f0f0f0; }
```
